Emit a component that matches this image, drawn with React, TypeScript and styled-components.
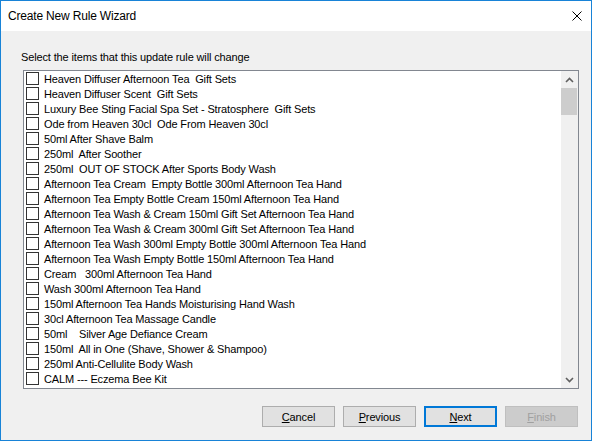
import React from "react";
import styled, { createGlobalStyle } from "styled-components";

const GlobalStyle = createGlobalStyle`
  html, body { margin: 0; padding: 0; overflow: hidden; background: #ffffff; }
  * { box-sizing: border-box; }
`;

const Window = styled.div`
  width: 592px;
  height: 441px;
  border: 1px solid #1883d7;
  background: #f0f0f0;
  display: flex;
  flex-direction: column;
  font-family: "Liberation Sans", Arial, sans-serif;
  font-size: 11px;
  letter-spacing: -0.14px;
  color: #000;
`;

const TitleBar = styled.div`
  height: 30px;
  flex: none;
  background: #ffffff;
  display: flex;
  align-items: center;
  justify-content: space-between;
  padding: 0 9px 0 7px;
`;

const Title = styled.span`
  font-size: 12px;
  letter-spacing: -0.18px;
  color: #000;
`;

const Content = styled.div`
  flex: 1;
  display: flex;
  flex-direction: column;
`;

const Prompt = styled.div`
  margin-top: 20px;
  padding-left: 20px;
  height: 13px;
  line-height: 13px;
`;

const ListBox = styled.div`
  margin: 6px 12px 0 22px;
  height: 319px;
  border: 1px solid #828790;
  background: #ffffff;
  display: flex;
  overflow: hidden;
`;

const Items = styled.div`
  flex: 1;
  display: flex;
  flex-direction: column;
  overflow: hidden;
`;

const Row = styled.div`
  height: 15px;
  flex: none;
  display: flex;
  align-items: center;
  padding-left: 2px;
  white-space: pre;
`;

const Check = styled.span`
  width: 13px;
  height: 13px;
  flex: none;
  border: 1px solid #333333;
  background: #ffffff;
  margin-right: 5px;
`;

const ScrollBar = styled.div`
  width: 17px;
  flex: none;
  background: #f0f0f0;
  display: flex;
  flex-direction: column;
`;

const Arrow = styled.div`
  height: 17px;
  flex: none;
  display: flex;
  align-items: center;
  justify-content: center;
`;

const Thumb = styled.div`
  height: 27px;
  flex: none;
  background: #cdcdcd;
  margin: 0 1px 0 0;
`;

const Track = styled.div`
  flex: 1;
`;

const ButtonRow = styled.div`
  margin: 17px 13px 0 0;
  display: flex;
  justify-content: flex-end;
  gap: 8px;
`;

const Button = styled.div<{ $primary?: boolean; $disabled?: boolean }>`
  width: 73px;
  height: 21px;
  display: flex;
  align-items: center;
  justify-content: center;
  background: ${(p) => (p.$disabled ? "#cccccc" : "#e1e1e1")};
  border: ${(p) =>
    p.$primary ? "2px solid #0078d7" : p.$disabled ? "1px solid #bfbfbf" : "1px solid #adadad"};
  color: ${(p) => (p.$disabled ? "#a0a0a0" : "#000")};
`;

const U = styled.span`
  text-decoration: underline;
`;

const items = [
  "Heaven Diffuser Afternoon Tea  Gift Sets",
  "Heaven Diffuser Scent  Gift Sets",
  "Luxury Bee Sting Facial Spa Set - Stratosphere  Gift Sets",
  "Ode from Heaven 30cl  Ode From Heaven 30cl",
  "50ml After Shave Balm",
  "250ml  After Soother",
  "250ml  OUT OF STOCK After Sports Body Wash",
  "Afternoon Tea Cream  Empty Bottle 300ml Afternoon Tea Hand",
  "Afternoon Tea Empty Bottle Cream 150ml Afternoon Tea Hand",
  "Afternoon Tea Wash & Cream 150ml Gift Set Afternoon Tea Hand",
  "Afternoon Tea Wash & Cream 300ml Gift Set Afternoon Tea Hand",
  "Afternoon Tea Wash 300ml Empty Bottle 300ml Afternoon Tea Hand",
  "Afternoon Tea Wash Empty Bottle 150ml Afternoon Tea Hand",
  "Cream   300ml Afternoon Tea Hand",
  "Wash 300ml Afternoon Tea Hand",
  "150ml Afternoon Tea Hands Moisturising Hand Wash",
  "30cl Afternoon Tea Massage Candle",
  "50ml    Silver Age Defiance Cream",
  "150ml  All in One (Shave, Shower & Shampoo)",
  "250ml Anti-Cellulite Body Wash",
  "CALM --- Eczema Bee Kit",
];

export default function App() {
  return (
    <>
      <GlobalStyle />
      <Window>
        <TitleBar>
          <Title>Create New Rule Wizard</Title>
          <svg width="10" height="10" viewBox="0 0 10 10">
            <path d="M0.5 0.5 L9.5 9.5 M9.5 0.5 L0.5 9.5" stroke="#000" strokeWidth="1" />
          </svg>
        </TitleBar>
        <Content>
          <Prompt>Select the items that this update rule will change</Prompt>
          <ListBox>
            <Items>
              {items.map((t, i) => (
                <Row key={i}>
                  <Check />
                  {t}
                </Row>
              ))}
            </Items>
            <ScrollBar>
              <Arrow>
                <svg width="9" height="6" viewBox="0 0 9 6">
                  <path d="M1 5 L4.5 1.5 L8 5" stroke="#606060" strokeWidth="1.6" fill="none" />
                </svg>
              </Arrow>
              <Thumb />
              <Track />
              <Arrow>
                <svg width="9" height="6" viewBox="0 0 9 6">
                  <path d="M1 1 L4.5 4.5 L8 1" stroke="#606060" strokeWidth="1.6" fill="none" />
                </svg>
              </Arrow>
            </ScrollBar>
          </ListBox>
          <ButtonRow>
            <Button>
              <span><U>C</U>ancel</span>
            </Button>
            <Button>
              <span><U>P</U>revious</span>
            </Button>
            <Button $primary>
              <span><U>N</U>ext</span>
            </Button>
            <Button $disabled>
              <span><U>F</U>inish</span>
            </Button>
          </ButtonRow>
        </Content>
      </Window>
    </>
  );
}
